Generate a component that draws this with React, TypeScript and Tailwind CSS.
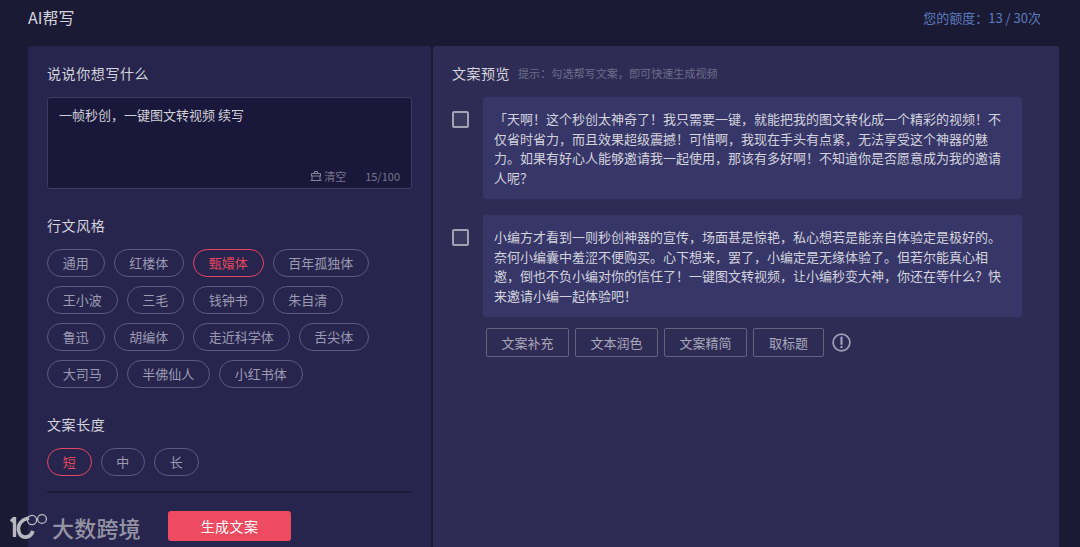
// App.tsx
const styleRows = [
  ['通用', '红楼体', '甄嬛体', '百年孤独体'],
  ['王小波', '三毛', '钱钟书', '朱自清'],
  ['鲁迅', '胡编体', '走近科学体', '舌尖体'],
  ['大司马', '半佛仙人', '小红书体'],
]

const results = [
  '「天啊\uFF01这个秒创太神奇了\uFF01我只需要一键\uFF0C就能把我的图文转化成一个精彩的视频\uFF01不仅省时省力\uFF0C而且效果超级震撼\uFF01可惜啊\uFF0C我现在手头有点紧\uFF0C无法享受这个神器的魅力。如果有好心人能够邀请我一起使用\uFF0C那该有多好啊\uFF01不知道你是否愿意成为我的邀请人呢\uFF1F',
  '小编方才看到一则秒创神器的宣传\uFF0C场面甚是惊艳\uFF0C私心想若是能亲自体验定是极好的。奈何小编囊中羞涩不便购买。心下想来\uFF0C罢了\uFF0C小编定是无缘体验了。但若尔能真心相邀\uFF0C倒也不负小编对你的信任了\uFF01一键图文转视频\uFF0C让小编秒变大神\uFF0C你还在等什么\uFF1F快来邀请小编一起体验吧\uFF01',
]

function Chip({ label, active = false }: { label: string; active?: boolean }) {
  return (
    <span
      className={`flex h-7 items-center rounded-full border px-[14.75px] text-[13px] ${
        active ? 'border-[#e2475f] text-[#e2475f]' : 'border-[#5c5a80] text-[#9c9bb2]'
      }`}
    >
      {label}
    </span>
  )
}

function BroomIcon() {
  return (
    <svg className="h-3 w-3 text-[#85849a]" viewBox="0 0 12 12" fill="none" stroke="currentColor" strokeWidth="1">
      <path d="M4.5 3.5V1.5H7.5V3.5" />
      <path d="M1.5 3.5H10.5V6H1.5Z" />
      <path d="M2 6V10.5H10V6" />
      <path d="M0.5 10.5H11.5" />
    </svg>
  )
}

function WarnIcon() {
  return (
    <svg className="ml-[2px] h-[19px] w-[19px] text-[#a09fb6]" viewBox="0 0 19 19" fill="none" stroke="currentColor">
      <circle cx="9.5" cy="9.5" r="8.4" strokeWidth="1.7" />
      <path d="M9.5 4.6V11" strokeWidth="2.2" strokeLinecap="round" />
      <circle cx="9.5" cy="14" r="1.2" fill="currentColor" stroke="none" />
    </svg>
  )
}

function Watermark() {
  return (
    <div className="pointer-events-none absolute bottom-[6px] left-[10px] flex items-center gap-[5px] text-[#b9b8c0]">
      <svg className="h-[28px] w-[37px]" viewBox="0 0 37 28" fill="none" stroke="currentColor">
        <path d="M4.5 5 L1 8.5 M4.5 4V24" strokeWidth="3.4" />
        <path d="M19 5 C10 7 7 13 9 19 C11 26 20 26 23 18" strokeWidth="3.6" />
        <circle cx="22" cy="7" r="4.6" strokeWidth="1.3" />
        <circle cx="32" cy="6" r="4.4" strokeWidth="1.3" />
      </svg>
      <span className="text-[22px] leading-[28px] font-medium tracking-[0.2px] opacity-75">大数跨境</span>
    </div>
  )
}

export default function App() {
  return (
    <div className="relative flex h-[547px] w-[1080px] flex-col overflow-hidden bg-[#1b1a35] font-['Noto_Sans_CJK_SC','Noto_Sans',sans-serif]">
      {/* Header */}
      <div className="flex h-[46px] shrink-0 items-start justify-between pr-[39px] pl-[28px]">
        <span className="mt-[5px] text-[16px] leading-6 text-[#d5d5de]">AI帮写</span>
        <span className="mt-[9px] text-[13px] leading-[18px] text-[#5d7bbf]">{'您的额度\uFF1A13 / 30次'}</span>
      </div>

      <div className="flex min-h-0 flex-1 gap-[2px] pr-[21px] pl-[28px]">
        {/* Left form panel */}
        <div className="w-[403px] shrink-0 rounded-t-[3px] bg-[#27254d] px-[19px] pt-[16px]">
          <h2 className="text-[14px] leading-[22px] tracking-[0.6px] text-[#d5d5de]">说说你想写什么</h2>
          <div className="mt-[13px] flex h-[92px] w-[365px] flex-col justify-between rounded-[3px] border border-[#3d3b62] bg-[#1a183a] pt-[7px] pr-[11px] pb-[3px] pl-[11px]">
            <p className="text-[13px] leading-5 text-[#cfcfd8]">{'一帧秒创\uFF0C一键图文转视频 续写'}</p>
            <div className="flex items-center justify-end text-[11px] leading-[18px] text-[#75748c]">
              <BroomIcon />
              <span className="ml-[2px]">清空</span>
              <span className="ml-[19px]">15/100</span>
            </div>
          </div>

          <h2 className="mt-[25px] text-[14px] leading-[22px] tracking-[0.6px] text-[#d5d5de]">行文风格</h2>
          <div className="mt-[13px] flex flex-col gap-[9px]">
            {styleRows.map((row, i) => (
              <div key={i} className="flex gap-[9px]">
                {row.map((s) => (
                  <Chip key={s} label={s} active={s === '甄嬛体'} />
                ))}
              </div>
            ))}
          </div>

          <h2 className="mt-[25px] text-[14px] leading-[22px] tracking-[0.6px] text-[#d5d5de]">文案长度</h2>
          <div className="mt-[13px] flex gap-[9px]">
            <Chip label="短" active />
            <Chip label="中" />
            <Chip label="长" />
          </div>

          <div className="mt-[15px] h-[2px] w-[365px] bg-[#1c1b38]" />

          <div className="mt-[18px] flex pl-[121px]">
            <button className="h-[30px] w-[123px] rounded-[3px] bg-[#ee4a60] text-[14px] tracking-[0.4px] text-white">生成文案</button>
          </div>
        </div>

        {/* Right preview panel */}
        <div className="flex-1 rounded-t-[3px] bg-[#2e2c55] pt-[16px] pl-[19px]">
          <div className="flex items-center">
            <h2 className="text-[14px] leading-[22px] tracking-[0.5px] text-[#d5d5de]">文案预览</h2>
            <span className="ml-[8px] text-[11.1px] text-[#6d6c8a]">{'提示\uFF1A勾选帮写文案\uFF0C即可快速生成视频'}</span>
          </div>

          <div className="mt-[13px] flex flex-col gap-4">
            {results.map((text) => (
              <div key={text} className="flex">
                <span className="mt-[14px] h-[17px] w-[17px] shrink-0 rounded-[2px] border-2 border-[#a3a2b4] bg-[#3a3960]" />
                <p className="ml-[14px] h-[102px] w-[539px] rounded-[3px] bg-[#363668] px-[11px] py-[12px] text-[13px] leading-[19.5px] text-[#d3d3de]">
                  {text}
                </p>
              </div>
            ))}
          </div>

          <div className="mt-[11px] flex items-center gap-[6px] pl-[34px]">
            {['文案补充', '文本润色', '文案精简'].map((b) => (
              <span key={b} className="flex h-[29px] w-[83px] items-center justify-center rounded-[2px] border border-[#64637f] text-[13px] text-[#a9a8bb]">
                {b}
              </span>
            ))}
            <span className="flex h-[29px] w-[71px] items-center justify-center rounded-[2px] border border-[#64637f] text-[13px] text-[#a9a8bb]">取标题</span>
            <WarnIcon />
          </div>
        </div>
      </div>

      <Watermark />
    </div>
  )
}
